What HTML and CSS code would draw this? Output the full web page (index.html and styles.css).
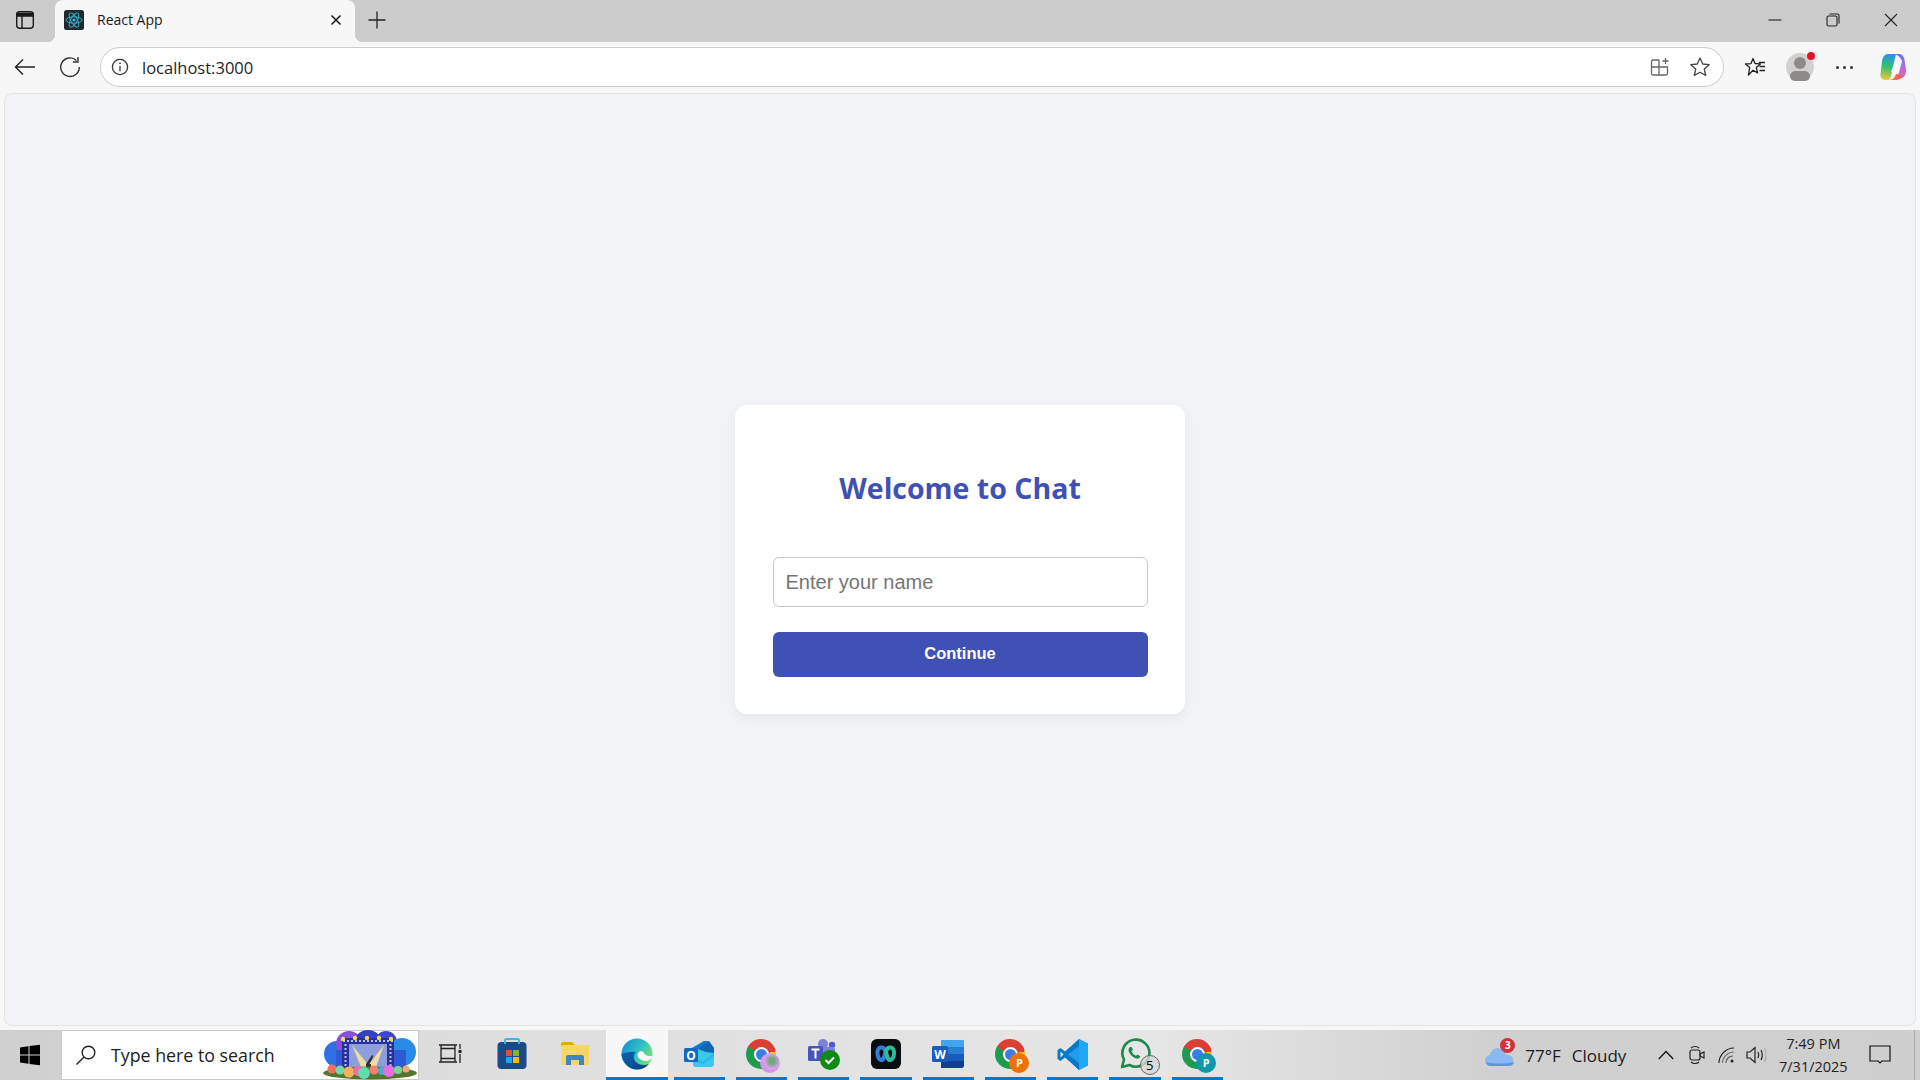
FILE: index.html
```html
<!DOCTYPE html>
<html>
<head>
    <meta charset="UTF-8">
    <title>React App</title>
    <link rel="stylesheet" href="styles.css">
</head>
<body>

<!-- Полоса вкладок -->
<div class="tabstrip">
    <div class="tab-side">
        <svg width="20" height="20" viewBox="0 0 20 20" fill="none" stroke="#1a1a1a" stroke-width="1.4"><rect x="1.7" y="1.7" width="16.6" height="16.6" rx="3"/><path d="M2 3.5h16v2.6H2z" fill="#1a1a1a"/><path d="M7 6v12"/></svg>
    </div>
    <div class="tab">
        <svg class="favicon" width="20" height="20" viewBox="0 0 20 20" fill="none" stroke="#3fb6d8" stroke-width="0.9"><rect width="20" height="20" rx="2.5" fill="#1f2a30" stroke="none"/><ellipse cx="10" cy="10" rx="8" ry="3.2"/><ellipse cx="10" cy="10" rx="8" ry="3.2" transform="rotate(60 10 10)"/><ellipse cx="10" cy="10" rx="8" ry="3.2" transform="rotate(120 10 10)"/><circle cx="10" cy="10" r="1.6" fill="#3fb6d8" stroke="none"/></svg>
        <span class="tab-title">React App</span>
        <svg class="tab-close" width="12" height="12" viewBox="0 0 12 12" stroke="#1a1a1a" stroke-width="1.5"><path d="M1.5 1.5l9 9M10.5 1.5l-9 9"/></svg>
    </div>
    <svg class="tab-new" width="18" height="18" viewBox="0 0 18 18" stroke="#222" stroke-width="1.3"><path d="M9 0.5v17M0.5 9h17"/></svg>
    <div class="win-controls">
        <svg width="14" height="14" viewBox="0 0 14 14" stroke="#222" stroke-width="1.1"><path d="M0.5 7h13"/></svg>
        <svg width="14" height="14" viewBox="0 0 14 14" fill="none" stroke="#222" stroke-width="1.1"><rect x="1" y="3" width="10" height="10" rx="1.5"/><path d="M3.5 1h8A1.5 1.5 0 0 1 13 2.500v8"/></svg>
        <svg width="14" height="14" viewBox="0 0 14 14" stroke="#222" stroke-width="1.1"><path d="M1 1l12 12M13 1L1 13"/></svg>
    </div>
</div>

<!-- Панель адреса -->
<div class="toolbar">
    <svg class="tool-back" width="22" height="18" viewBox="0 0 22 18" fill="none" stroke="#222" stroke-width="1.4"><path d="M21 9H1.500M9 1.500L1.500 9 9 16.500"/></svg>
    <svg class="tool-reload" width="22" height="22" viewBox="0 0 22 22" fill="none" stroke="#333" stroke-width="1.4"><path d="M17.500 4.500A9.300 9.300 0 1 0 20.300 11"/><path d="M19 1v5h-5"/></svg>
    <div class="addressbar">
        <svg width="18" height="18" viewBox="0 0 18 18" fill="none" stroke="#333" stroke-width="1.300"><circle cx="9" cy="9" r="7.600"/><path d="M9 8v5.200"/><circle cx="9" cy="5.300" r="0.900" fill="#333" stroke="none"/></svg>
        <span class="url">localhost:3000</span>
        <svg class="addr-apps" width="20" height="20" viewBox="0 0 20 20" fill="none" stroke="#666" stroke-width="1.300"><path d="M9 3H3a1.500 1.500 0 0 0-1.500 1.500v12A1.500 1.500 0 0 0 3 18h13a1.500 1.500 0 0 0 1.500-1.500V10H1.500M9 3v15"/><path d="M15.500 1v6M12.500 4h6"/></svg>
        <svg class="addr-star" width="22" height="22" viewBox="0 0 22 22" fill="none" stroke="#444" stroke-width="1.300" stroke-linejoin="round"><path d="M11 2l2.700 6 6.500 .7-4.900 4.400 1.400 6.400L11 16.200 5.300 19.500l1.400-6.400L1.800 8.700 8.300 8z"/></svg>
    </div>
    <svg class="tool-fav" width="22" height="20" viewBox="0 0 22 20" fill="none" stroke="#222" stroke-width="1.300" stroke-linejoin="round"><path d="M9 1.500l2 5 5.500 .4-4.200 3.600 1.300 5.400L9 13.200 4.400 18l1.300-7.500L1.500 7l5.500-.4z"/><path d="M15 5.500h6M15.500 9.500h5.500M15.500 13.500h5.500"/></svg>
    <div class="avatar">
        <span class="avatar-head"></span>
        <span class="avatar-body"></span>
        <span class="avatar-dot"></span>
    </div>
    <div class="tool-more"><span></span><span></span><span></span></div>
    <svg class="tool-copilot" width="28" height="28" viewBox="0 0 28 28">
        <defs>
            <linearGradient id="cop-a" x1="0.400" y1="0" x2="0.300" y2="1"><stop offset="0" stop-color="#2b8fe6"/><stop offset="0.500" stop-color="#35c46b"/><stop offset="1" stop-color="#f0c83a"/></linearGradient>
            <linearGradient id="cop-b" x1="0.500" y1="0" x2="0.500" y2="1"><stop offset="0" stop-color="#5c7ae8"/><stop offset="0.500" stop-color="#b56ae0"/><stop offset="1" stop-color="#e56aa8"/></linearGradient>
            <linearGradient id="cop-c" x1="0" y1="0" x2="1" y2="0"><stop offset="0" stop-color="#f4a03a"/><stop offset="1" stop-color="#ee4f5a"/></linearGradient>
        </defs>
        <path d="M9 1h8l-5 22c-.5 2-2 4-4 4H6c-3 0-5-3-4.500-6L3 8c.5-4 3-7 6-7z" fill="url(#cop-a)"/>
        <path d="M14 1h6c3 0 5 2.500 5.500 5.500l1.500 10c.5 5-2 9-6 9h-6c3-1 4-3 5-6l3-11c-1-4-5-7.500-9-7.500z" fill="url(#cop-b)"/>
        <path d="M9 27h8c3 0 5-2 6-5l-6-1c-1 3-3 6-8 6z" fill="url(#cop-c)"/>
        <path d="M15.500 9.500h3.500l-3 9.500h-4z" fill="#fff"/>
    </svg>
</div>

<!-- Содержимое страницы -->
<div class="page">
    <div class="card">
        <h2 class="card-title">Welcome to Chat</h2>
        <input class="name-input" type="text" placeholder="Enter your name">
        <button class="continue-btn">Continue</button>
    </div>
</div>
<div class="page-gap"></div>

<!-- Панель задач -->
<div class="taskbar">
    <div class="tb-start">
        <svg width="22" height="22" viewBox="0 0 22 22" fill="#000"><path d="M1 3.500l8.500-1.200v8.200H1zM10.500 2.100L21 .7v9.800H10.500zM1 11.500h8.500v8.200L1 18.500zM10.500 11.500H21v9.800l-10.500-1.400z"/></svg>
    </div>
    <div class="tb-search">
        <svg width="22" height="22" viewBox="0 0 22 22" fill="none" stroke="#222" stroke-width="1.400"><circle cx="13.500" cy="8.500" r="6.300"/><path d="M9 13L1.500 20.500"/></svg>
        <span class="tb-search-text">Type here to search</span>
        <svg class="tb-doodle" width="96" height="50" viewBox="0 0 96 50">
            <circle cx="15" cy="24" r="13" fill="#2f70e4"/>
            <circle cx="27" cy="14" r="13" fill="#8a4fd8"/>
            <circle cx="46" cy="14" r="14" fill="#3340c4"/>
            <circle cx="64" cy="12" r="11" fill="#3a48cc"/>
            <circle cx="80" cy="22" r="14" fill="#2a8ae8"/>
            <rect x="14" y="20" width="70" height="20" fill="#2f5ad4"/>
            <rect x="20" y="8" width="52" height="30" fill="#2a2f9e"/>
            <rect x="27" y="14" width="38" height="24" fill="#8d9edc"/>
            <path d="M21 11h50M23.500 14v24M68.500 14v24" stroke="#b8c4f0" stroke-width="2" stroke-dasharray="2 2" fill="none"/>
            <path d="M30 15l9 22h9zM62 15l-8 22h-9z" fill="#f0dca0"/>
            <g fill="#f5d94e"><circle cx="21" cy="9" r="2.200"/><circle cx="33" cy="8" r="2.200"/><circle cx="45" cy="8" r="2.200"/><circle cx="57" cy="8" r="2.200"/><circle cx="69" cy="9" r="2.200"/></g>
            <path d="M44 34l6-9 1.500 1-4.500 9zM44 34h5v3h-5z" fill="#333"/>
            <ellipse cx="48" cy="43" rx="47" ry="6.500" fill="#55752f"/>
            <circle cx="10" cy="39" r="4.500" fill="#f0705a"/><circle cx="18" cy="40" r="4.500" fill="#78d8a8"/><circle cx="27" cy="42" r="5.500" fill="#f5b060"/><circle cx="36" cy="41" r="5" fill="#ee6fa8"/><circle cx="42" cy="43" r="6" fill="#5fdcb0"/><circle cx="52" cy="40" r="4.500" fill="#f08070"/><circle cx="60" cy="41" r="4" fill="#4fa8d8"/><circle cx="67" cy="41" r="6" fill="#e66fe0"/><circle cx="76" cy="40" r="4" fill="#78d890"/><circle cx="84" cy="39" r="3.500" fill="#f0a878"/>
        </svg>
    </div>

    <div class="tb-apps">
        <div class="tb-app">
            <svg width="24" height="24" viewBox="0 0 24 24" fill="none" stroke="#222" stroke-width="1.300"><path d="M3 6.500h14v10H3zM1 3h18M1 20h18M3 3v3.500M17 3v3.500M3 16.500V20M17 16.500V20M22 2v5M22 12v9"/><rect x="20.500" y="8" width="3" height="3" fill="#222" stroke="none"/></svg>
        </div>
        <div class="tb-app">
            <svg width="30" height="32" viewBox="0 0 30 32"><rect x="0.500" y="4" width="29" height="27" rx="4" fill="#1b4a88"/><path d="M8 6V2.500C8 1.500 8.500 1 9.500 1h11c1 0 1.500 .5 1.500 1.500V6" fill="none" stroke="#38b6ea" stroke-width="2"/><path d="M9 12h6v6H9z" fill="#ea4e28"/><path d="M16 12h6v6h-6z" fill="#7db82a"/><path d="M9 19h6v6H9z" fill="#1ca6ec"/><path d="M16 19h6v6h-6z" fill="#fbb912"/></svg>
        </div>
        <div class="tb-app">
            <svg width="28" height="24" viewBox="0 0 28 24"><path d="M0 2a2 2 0 0 1 2-2h9l3 3h12a2 2 0 0 1 2 2v4H0z" fill="#e5a70f"/><rect y="3" width="28" height="20" rx="2" fill="#fbd568"/><path d="M5 23v-8a2 2 0 0 1 2-2h14a2 2 0 0 1 2 2v8h-5v-5h-8v5z" fill="#3b87c4"/></svg>
        </div>
        <div class="tb-app tb-app-active">
            <svg width="32" height="32" viewBox="0 0 32 32">
                <defs>
                    <linearGradient id="edge-a" x1="0" y1="0" x2="1" y2="0.600"><stop offset="0" stop-color="#0f87d2"/><stop offset="0.600" stop-color="#33c4c0"/><stop offset="1" stop-color="#7ee070"/></linearGradient>
                    <linearGradient id="edge-b" x1="0" y1="0" x2="1" y2="1"><stop offset="0" stop-color="#0c62b0"/><stop offset="1" stop-color="#0a3f86"/></linearGradient>
                </defs>
                <circle cx="16" cy="16" r="15.500" fill="url(#edge-a)"/>
                <path d="M.500 16C1 24 8 31.500 16 31.500c5 0 9-2 12-5.500-5 2-11 1-14-3-2-3-1.500-7 1-9-6-1-14.500 2-14.500 2z" fill="url(#edge-b)"/>
                <path d="M31.500 19c-1 3.500-7 5-11 3-3-1.500-5-4.500-3.500-7 1.500-2.500 5-2.500 6 0 .7 2 3 3 5 3 1.500 0 3-.5 3.500 1z" fill="#f7f7f7"/>
            </svg>
        </div>
        <div class="tb-app tb-app-open">
            <svg width="30" height="28" viewBox="0 0 30 28"><path d="M8 8L20 1h5l5 7v16a3 3 0 0 1-3 3H12a3 3 0 0 1-3-3z" fill="#38c8f0"/><path d="M8 8L20 1h5L16 9z" fill="#1678c8"/><path d="M14 9l11-8 5 7v5l-8-1z" fill="#0f68b4"/><path d="M9 18l10 4 11-9v3l-11 8-10-3z" fill="#1ea8e0" opacity="0.600"/><rect y="8" width="14" height="14" rx="1.500" fill="#0f6cbd"/><text class="tb-letter" x="7" y="19.500" text-anchor="middle">O</text></svg>
        </div>
        <div class="tb-app tb-app-open">
            <span class="chrome"><span class="chrome-eye"></span><span class="chrome-badge chrome-badge-glass"></span></span>
        </div>
        <div class="tb-app tb-app-open">
            <svg width="34" height="32" viewBox="0 0 34 32"><circle cx="16" cy="6" r="5" fill="#7b83d8"/><circle cx="25" cy="7" r="3.200" fill="#5059c9"/><rect x="14" y="9" width="14" height="14" rx="3" fill="#7b83d8"/><rect x="1" y="8" width="15" height="15" rx="1.500" fill="#4b53bc"/><path d="M4.500 11.500h8M8.500 11.500v9" stroke="#fff" stroke-width="2" fill="none"/><circle cx="23" cy="22" r="10" fill="#108a17"/><path d="M18.500 22l3 3 5.500-5.500" stroke="#fff" stroke-width="2" fill="none"/></svg>
        </div>
        <div class="tb-app tb-app-open">
            <svg width="30" height="30" viewBox="0 0 30 30" fill="none" stroke-width="4"><rect width="30" height="30" rx="6" fill="#0b0d10" stroke="none"/><path d="M14.500 12C13 8 9 7.500 7.300 10c-2 3.500-.5 10 2.700 11 2.500.7 3.800-4 4.500-9z" stroke="#2f7fd8"/><path d="M15 12c1.500-4 5.500-4.500 7.200-2 2 3.500.5 10-2.700 11-2.500.7-3.800-4-4.500-9z" stroke="#2fb89a"/></svg>
        </div>
        <div class="tb-app tb-app-open">
            <svg width="32" height="28" viewBox="0 0 32 28"><path d="M9 0h20a3 3 0 0 1 3 3v22a3 3 0 0 1-3 3H9z" fill="#2b7cd3"/><path d="M9 0h23v7H9z" fill="#41a5ee"/><path d="M9 14h23v7H9z" fill="#185abd"/><path d="M9 21h23v4a3 3 0 0 1-3 3H9z" fill="#103f91"/><rect y="6" width="16" height="16" rx="1.500" fill="#1a5cbe"/><text class="tb-letter" x="8" y="18.500" text-anchor="middle">W</text></svg>
        </div>
        <div class="tb-app tb-app-open">
            <span class="chrome"><span class="chrome-eye"></span><span class="chrome-badge chrome-badge-orange">P</span></span>
        </div>
        <div class="tb-app tb-app-open">
            <svg width="31" height="31" viewBox="0 0 31 31"><path d="M22 0l9 4.500v22L22 31 9 18.500z" fill="#1f9cf0"/><path d="M22 0l.2 31L31 26.500v-22z" fill="#1fa8f4"/><path d="M22 7L11 15.500l11 8.500v7L8 18.500 3.500 22 .5 20v-9l3-2L8 12.500 22 0z" fill="#0a78c8"/><path d="M3.500 12.500v6l3-3z" fill="#e8e8e8"/></svg>
        </div>
        <div class="tb-app tb-app-open">
            <svg width="32" height="32" viewBox="0 0 32 32" fill="none"><path d="M3 29l2-7.500A13.500 13.500 0 1 1 10.500 27z" stroke="#1b8a4f" stroke-width="2.600" stroke-linejoin="round"/><path d="M11 9c-1.500 1-2 3 -1 5 1.500 3 4 5.500 7 6.500 2 .5 4-.5 4.500-2l-3-2-1.500 1.300c-2-1-3.500-2.500-4.500-4.500L14 11.500 12.500 9z" fill="#1b8a4f"/></svg>
            <span class="wa-count">5</span>
        </div>
        <div class="tb-app tb-app-open">
            <span class="chrome"><span class="chrome-eye"></span><span class="chrome-badge chrome-badge-teal">P</span></span>
        </div>
    </div>

    <div class="tb-tray">
        <div class="weather">
            <svg width="30" height="24" viewBox="0 0 30 24"><path d="M6 23a5.500 5.500 0 0 1-1-11c1-5 6-8 11-6 3 1 4.500 3 5 6a5.500 5.500 0 0 1 3 11z" fill="#8ab8f0"/><path d="M6 23a5.500 5.500 0 0 1-5-4c6 2 20 2 28 0a5.500 5.500 0 0 1-5 4z" fill="#5f94e0"/></svg>
            <span class="weather-badge">3</span>
            <span class="weather-temp">77°F</span>
            <span class="weather-text">Cloudy</span>
        </div>
        <svg class="tray-chevron" width="16" height="10" viewBox="0 0 16 10" fill="none" stroke="#111" stroke-width="1.300"><path d="M.8 9L8 1.500 15.200 9"/></svg>
        <svg class="tray-cam" width="16" height="20" viewBox="0 0 16 20" fill="none" stroke="#222" stroke-width="1.200"><rect x="1" y="5" width="10" height="10" rx="2"/><path d="M11 9l4-2v6l-4-2zM2 3c2-2 6-2 8 0M2 17c2 2 6 2 8 0"/></svg>
        <svg class="tray-wifi" width="18" height="18" viewBox="0 0 18 18" fill="none" stroke="#222" stroke-width="1.100"><path d="M1 17C1 9 8 2 16 2" /><path d="M4.500 17C4.500 11 10 6 16 6" stroke="#777"/><path d="M8 17c0-4 3-7 7-7" stroke="#555"/><circle cx="14" cy="15" r="1.500" fill="#222" stroke="none"/></svg>
        <svg class="tray-sound" width="22" height="18" viewBox="0 0 22 18" fill="none" stroke="#222" stroke-width="1.200"><path d="M1 6h3l5-4.500v15L4 12H1z"/><path d="M12 6c1 2 1 4 0 6M15 4c1.500 3 1.500 7 0 10"/><path d="M18.500 2c2 4 2 10 0 14" stroke="#aaa"/></svg>
        <div class="clock">
            <span>7:49 PM</span>
            <span>7/31/2025</span>
        </div>
        <svg class="tray-notify" width="22" height="20" viewBox="0 0 22 20" fill="none" stroke="#111" stroke-width="1.200"><path d="M1 1h20v15h-8l-2 2-2-2H1z"/></svg>
        <span class="show-desktop"></span>
    </div>
</div>

</body>
</html>
```

FILE: styles.css
```css
* {
    box-sizing: border-box;
}
body {
    margin: 0;
    width: 1920px;
    height: 1080px;
    overflow: hidden;
    display: flex;
    flex-direction: column;
    background-color: #f7f7f7;
    font-family: "Open Sans", "Noto Sans", sans-serif;
}

/* tabs */
.tabstrip {
    height: 42px;
    flex: none;
    display: flex;
    align-items: center;
    background-color: #cccccc;
}
.tab-side {
    width: 55px;
    padding: 0 5px 2px 0;
    display: flex;
    justify-content: center;
}
.tab {
    position: relative;
    align-self: stretch;
    width: 300px;
    padding: 0 13px 2px 9px;
    display: flex;
    align-items: center;
    background-color: #f7f7f7;
    border-radius: 8px 8px 0 0;
}
.tab::before, .tab::after {
    content: "";
    position: absolute;
    bottom: 0;
    width: 8px;
    height: 8px;
}
.tab::before {
    left: -8px;
    background: radial-gradient(circle at 0 0, #cccccc 8px, #f7f7f7 8.500px);
}
.tab::after {
    right: -8px;
    background: radial-gradient(circle at 100% 0, #cccccc 8px, #f7f7f7 8.500px);
}
.tab-title {
    margin: 0 0 2px 13px;
    flex: 1;
    font-size: 14px;
    color: #1a1a1a;
}
.tab-new {
    margin: 0 0 2px 13px;
}
.win-controls {
    margin-left: auto;
    padding: 0 22px 2px 0;
    display: flex;
    gap: 44px;
}

/* address bar */
.toolbar {
    height: 50px;
    flex: none;
    display: flex;
    align-items: center;
    padding: 0 13px 0 14px;
    background-color: #f7f7f7;
}
.tool-reload {
    margin-left: 23px;
}
.addressbar {
    margin-left: 19px;
    width: 1624px;
    flex: none;
    height: 40px;
    padding: 0 12px 0 10px;
    display: flex;
    align-items: center;
    background-color: #fff;
    border: 1px solid #cdcdcd;
    border-radius: 20px;
}
.url {
    margin-left: 13px;
    flex: 1;
    font-size: 16.500px;
    color: #1f1f1f;
}
.addr-star {
    margin-left: 19px;
}
.tool-fav {
    margin-left: 20px;
}
.avatar {
    position: relative;
    margin-left: 20px;
    width: 28px;
    height: 28px;
    border-radius: 50%;
    overflow: visible;
    background-color: #d3d1cf;
}
.avatar-head {
    position: absolute;
    left: 8px;
    top: 4px;
    width: 12px;
    height: 12px;
    border-radius: 50%;
    background-color: #8e8a87;
}
.avatar-body {
    position: absolute;
    left: 4px;
    top: 18px;
    width: 20px;
    height: 10px;
    border-radius: 10px 10px 9px 9px;
    background-color: #8e8a87;
}
.avatar-dot {
    position: absolute;
    left: 21px;
    top: -1px;
    width: 8px;
    height: 8px;
    border-radius: 50%;
    background-color: #e81123;
}
.tool-more {
    margin-left: 22px;
    width: 17px;
    display: flex;
    justify-content: space-between;
}
.tool-more span {
    width: 3px;
    height: 3px;
    border-radius: 50%;
    background-color: #333;
}
.tool-copilot {
    margin-left: 26px;
}

/* page */
.page {
    flex: 1;
    margin: 1px 4px 0;
    display: flex;
    align-items: center;
    justify-content: center;
    background-color: #f1f3f7;
    border: 1px solid #e4e4e6;
    border-radius: 8px;
}
.page-gap {
    height: 4px;
    flex: none;
}
.card {
    width: 450px;
    height: 309px;
    padding: 37px 37.500px;
    display: flex;
    flex-direction: column;
    background-color: #fff;
    border-radius: 12px;
    box-shadow: 0 4px 12px rgba(0, 0, 0, 0.05);
}
.card-title {
    margin: 26px 0 48px;
    font-family: "Open Sans", "Noto Sans", sans-serif;
    font-size: 28.500px;
    font-weight: 700;
    line-height: 41px;
    text-align: center;
    color: #3f51b5;
}
.name-input {
    height: 50px;
    padding: 0 12px;
    font-family: "Liberation Sans", Arial, sans-serif;
    font-size: 20px;
    background-color: #fff;
    border: 1px solid #c8c8c8;
    border-radius: 6px;
}
.name-input::placeholder {
    color: #757575;
}
.continue-btn {
    margin-top: 25px;
    height: 45px;
    padding: 0 0 2px;
    font-family: "Liberation Sans", Arial, sans-serif;
    font-size: 16.500px;
    font-weight: 700;
    color: #fff;
    background-color: #3f51b5;
    border: none;
    border-radius: 6px;
    cursor: pointer;
}

/* taskbar */
.taskbar {
    height: 50px;
    flex: none;
    display: flex;
    background: linear-gradient(90deg, #cfcfcf 0%, #dedede 25%, #e6e6e6 60%, #d0d0d0 78%, #cfcfcf 100%);
}
.tb-start {
    width: 61px;
    padding-right: 2px;
    display: flex;
    align-items: center;
    justify-content: center;
}
.tb-search {
    position: relative;
    width: 358px;
    padding: 0 0 0 13px;
    display: flex;
    align-items: center;
    background-color: #fff;
    border: 1px solid #c9c9c9;
}
.tb-search-text {
    margin-left: 14px;
    font-size: 17.800px;
    color: #222;
}
.tb-doodle {
    position: absolute;
    right: 0;
    top: -1px;
}
.tb-apps {
    display: flex;
}
.tb-app {
    position: relative;
    width: 62.250px;
    display: flex;
    align-items: center;
    justify-content: center;
    padding-bottom: 2px;
}
.tb-app-active {
    background-color: #f7f7f7;
    border-bottom: 3px solid #0078d4;
    padding-bottom: 0;
}
.tb-app-open::after {
    content: "";
    position: absolute;
    left: 5.500px;
    right: 5.500px;
    bottom: 0;
    height: 3px;
    background-color: #0078d4;
}
.tb-letter {
    font-family: "Open Sans", sans-serif;
    font-size: 12px;
    font-weight: 700;
    fill: #fff;
}
.chrome {
    position: relative;
    width: 30px;
    height: 30px;
    border-radius: 50%;
    background: conic-gradient(#db3e33 0 80deg, #fbc116 80deg 170deg, #1f9a4e 170deg 300deg, #db3e33 300deg);
}
.chrome-eye {
    position: absolute;
    left: 7.500px;
    top: 7.500px;
    width: 15px;
    height: 15px;
    border-radius: 50%;
    background-color: #3a7de8;
    border: 2.500px solid #fff;
}
.chrome-badge {
    position: absolute;
    right: -4px;
    bottom: -4px;
    width: 20px;
    height: 20px;
    border-radius: 50%;
    font-size: 11px;
    font-weight: 700;
    line-height: 20px;
    text-align: center;
    color: #fff;
}
.chrome-badge-orange {
    background-color: #f07000;
}
.chrome-badge-teal {
    background-color: #0f97ab;
}
.chrome-badge-glass {
    background: radial-gradient(circle at 60% 40%, #6fa878 0 15%, #d8a0ec 45%, #c080e0 100%);
}
.wa-count {
    position: absolute;
    left: 36px;
    top: 25px;
    width: 20px;
    height: 20px;
    font-size: 13px;
    line-height: 18px;
    text-align: center;
    color: #000;
    background-color: rgba(215, 215, 215, 0.800);
    border: 1px solid #666;
    border-radius: 50%;
}

/* tray */
.tb-tray {
    flex: 1;
    display: flex;
    align-items: center;
    padding-left: 257px;
}
.weather {
    position: relative;
    display: flex;
    align-items: center;
    font-size: 17px;
    color: #1c1c1c;
}
.weather-badge {
    position: absolute;
    left: 15px;
    top: -5px;
    width: 15px;
    height: 15px;
    font-size: 10px;
    font-weight: 700;
    line-height: 15px;
    text-align: center;
    color: #fff;
    background-color: #d13438;
    border-radius: 50%;
}
.weather-temp {
    margin-left: 10px;
}
.weather-text {
    margin-left: 11px;
}
.tray-chevron {
    margin-left: 32px;
}
.tray-cam {
    margin-left: 15px;
}
.tray-wifi {
    margin-left: 13px;
}
.tray-sound {
    margin-left: 10px;
}
.clock {
    margin-left: 10px;
    width: 70px;
    display: flex;
    flex-direction: column;
    align-items: center;
    font-size: 14.500px;
    line-height: 23px;
    color: #222;
}
.tray-notify {
    margin-left: 21px;
}
.show-desktop {
    margin: 0 5px 0 auto;
    width: 1px;
    align-self: stretch;
    background-color: #a8a8a8;
}
```
